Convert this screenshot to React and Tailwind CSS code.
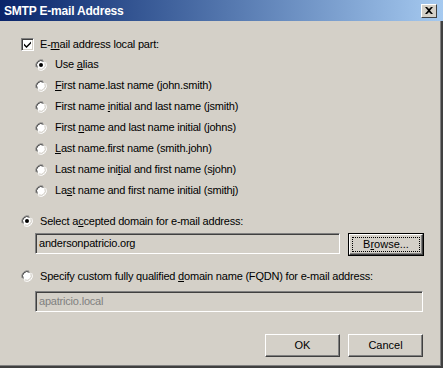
import React from 'react';

const FONT = { fontFamily: '"Liberation Sans", Arial, sans-serif' };

function Radio({ checked, disabled }) {
  return (
    <svg width="12" height="12" viewBox="0 0 12 12" className="flex-shrink-0">
      <path d="M8 1.1A5.5 5.5 0 0 0 1.1 8" stroke="#808080" strokeWidth="1" fill="none" />
      <path d="M10.7 3.2A5.5 5.5 0 0 1 3.2 10.7" stroke="#ffffff" strokeWidth="1" fill="none" />
      <circle cx="6" cy="6" r="4.5" fill={disabled ? '#d4d0c8' : '#ffffff'} />
      <path d="M8.5 2.3A4.5 4.5 0 0 0 2.3 8.5" stroke="#404040" strokeWidth="1" fill="none" />
      <path d="M9.8 3.8A4.5 4.5 0 0 1 3.8 9.8" stroke="#d4d0c8" strokeWidth="1" fill="none" />
      {checked && <circle cx="6" cy="6" r="2" fill="#000" />}
    </svg>
  );
}

function Check() {
  return (
    <div className="w-[13px] h-[13px] flex-shrink-0 bg-white border border-t-[#808080] border-l-[#808080] border-b-white border-r-white shadow-[inset_1px_1px_0_#404040,inset_-1px_-1px_0_#d4d0c8] flex items-center justify-center">
      <svg width="9" height="9" viewBox="0 0 9 9">
        <path d="M1 3.5 L3.5 6 L8 1.5 L8 3.5 L3.5 8 L1 5.5 Z" fill="#000" />
      </svg>
    </div>
  );
}

function Label({ pre, u, post, className = '' }) {
  return (
    <span className={`text-[11px] tracking-[-0.2px] text-black leading-none whitespace-nowrap ${className}`}>
      {pre}<span className="underline underline-offset-[1px]">{u}</span>{post}
    </span>
  );
}

function Button({ children, focused, className = '' }) {
  return (
    <div className={`${focused ? 'border border-black' : ''} ${className}`}>
      <div className="h-full bg-[#d4d0c8] border border-t-white border-l-white border-b-[#404040] border-r-[#404040] shadow-[inset_-1px_-1px_0_#808080,inset_1px_1px_0_#d4d0c8] flex items-center justify-center p-[3px]">
        <div className={`w-full h-full flex items-center justify-center text-[11px] text-black ${focused ? 'outline outline-1 outline-dotted outline-black' : ''}`}>
          {children}
        </div>
      </div>
    </div>
  );
}

const OPTIONS = [
  { pre: 'Use ', u: 'a', post: 'lias', checked: true },
  { pre: '', u: 'F', post: 'irst name.last name (john.smith)' },
  { pre: 'First name ', u: 'i', post: 'nitial and last name (jsmith)' },
  { pre: 'First ', u: 'n', post: 'ame and last name initial (johns)' },
  { pre: '', u: 'L', post: 'ast name.first name (smith.john)' },
  { pre: 'Last name ini', u: 't', post: 'ial and first name (sjohn)' },
  { pre: 'La', u: 's', post: 't name and first name initial (smithj)' },
];

export default function App() {
  return (
    <div className="w-[443px] h-[368px] bg-[#d4d0c8] flex flex-col overflow-hidden" style={FONT}>
      {/* Title bar */}
      <div className="h-[21px] flex items-center justify-between pl-[4px] pr-[6px] bg-gradient-to-r from-[#0a246a] to-[#a6caf0]">
        <span className="text-white font-bold text-[12px] tracking-[-0.2px]">SMTP E-mail Address</span>
        <div className="w-[16px] h-[14px] bg-[#d4d0c8] border border-t-white border-l-white border-b-[#404040] border-r-[#404040] flex items-center justify-center">
          <svg width="8" height="7" viewBox="0 0 8 7">
            <path d="M0 0h2l2 2 2-2h2L5 3.5 8 7H6L4 5 2 7H0l3-3.5z" fill="#000" />
          </svg>
        </div>
      </div>

      <div className="flex-1 flex border-r-2 border-b-2 border-r-[#404040] border-b-[#404040]">
        <div className="flex-1 flex flex-col pl-[21px] pt-[16px] border-r border-b border-r-[#808080] border-b-[#808080]">
          <div className="h-[14px] flex items-center gap-[6px]">
            <Check />
            <Label pre="E-" u="m" post="ail address local part:" />
          </div>

          <div className="flex flex-col pl-[14px] mt-[3px]">
            {OPTIONS.map((o, i) => (
              <div key={i} className="h-[21px] flex items-center gap-[8px]">
                <Radio checked={o.checked} />
                <Label pre={o.pre} u={o.u} post={o.post} />
              </div>
            ))}
          </div>

          <div className="h-[12px] flex items-center gap-[7px] mt-[14px]">
            <Radio checked />
            <Label pre="Select a" u="c" post="cepted domain for e-mail address:" />
          </div>

          <div className="flex items-start gap-[8px] pl-[14px] mt-[6px]">
            <div className="w-[305px] h-[21px] bg-[#d4d0c8] border border-t-[#808080] border-l-[#808080] border-b-white border-r-white shadow-[inset_1px_1px_0_#404040,inset_-1px_-1px_0_#d4d0c8] flex items-center px-[3px]">
              <span className="text-[11px] tracking-[-0.2px] text-black">andersonpatricio.org</span>
            </div>
            <Button focused className="w-[76px] h-[23px]">
              <span>B<span className="underline underline-offset-[1px]">r</span>owse...</span>
            </Button>
          </div>

          <div className="h-[12px] flex items-center gap-[7px] mt-[14px]">
            <Radio />
            <Label pre="Specify custom fully qualified " u="d" post="omain name (FQDN) for e-mail address:" />
          </div>

          <div className="pl-[14px] mt-[9px]">
            <div className="w-[388px] h-[21px] bg-[#d4d0c8] border border-t-[#808080] border-l-[#808080] border-b-white border-r-white shadow-[inset_1px_1px_0_#404040,inset_-1px_-1px_0_#d4d0c8] flex items-center px-[3px]">
              <span className="text-[11px] tracking-[-0.2px] text-[#808080]">apatricio.local</span>
            </div>
          </div>

          <div className="flex justify-end gap-[8px] mt-[22px] pr-[17px]">
            <Button className="w-[75px] h-[23px]">OK</Button>
            <Button className="w-[75px] h-[23px]">Cancel</Button>
          </div>
        </div>
      </div>
    </div>
  );
}
